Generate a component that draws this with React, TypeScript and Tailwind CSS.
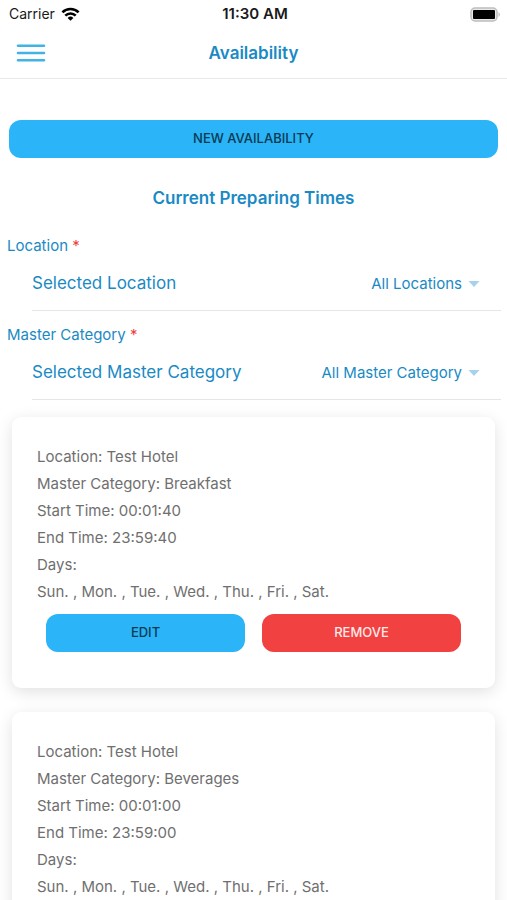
import { useState } from 'react'

type Availability = {
  id: number
  location: string
  category: string
  start: string
  end: string
  days: string[]
}

const week = ['Sun.', 'Mon.', 'Tue.', 'Wed.', 'Thu.', 'Fri.', 'Sat.']

const availabilities: Availability[] = [
  { id: 1, location: 'Test Hotel', category: 'Breakfast', start: '00:01:40', end: '23:59:40', days: week },
  { id: 2, location: 'Test Hotel', category: 'Beverages', start: '00:01:00', end: '23:59:00', days: week },
]

const StatusBar = () => (
  <div className="grid grid-cols-3 items-center h-7 pl-[9px] pr-[6px] text-[#1a1a1a]">
    <div className="flex items-center gap-[6px] text-sm">
      <span>Carrier</span>
      <svg width="19" height="14" viewBox="0 0 18 14" fill="none" stroke="#000" strokeWidth="2.6">
        <path d="M0.9 5.4a11.5 11.5 0 0 1 16.2 0" />
        <path d="M3.8 8.6a7.4 7.4 0 0 1 10.4 0" />
        <path d="M9 13.8L6.1 10.9a4.1 4.1 0 0 1 5.8 0z" fill="#000" stroke="none" />
      </svg>
    </div>
    <span className="text-center text-[15px] font-semibold">11:30 AM</span>
    <svg className="justify-self-end" width="31" height="15" viewBox="0 0 31 15">
      <rect x="1" y="1" width="26" height="13" rx="4" fill="#e8e8e8" stroke="#bdbdbd" strokeWidth="1.5" />
      <rect x="3" y="3" width="22" height="9" rx="1" fill="#000" />
      <path d="M28.5 5.2c1.8.6 1.8 4 0 4.6z" fill="#bdbdbd" />
    </svg>
  </div>
)

const Header = () => (
  <header className="border-b border-[#e9e9e9]">
    <StatusBar />
    <div className="grid grid-cols-[1fr_auto_1fr] items-center h-[50px] px-4">
      <button type="button" aria-label="Menu" className="w-[30px]">
        <svg width="30" height="20" viewBox="0 0 30 20" stroke="#41b3e4" strokeWidth="2.6" strokeLinecap="round">
          <path d="M2 2.7h26M2 10h26M2 17.3h26" />
        </svg>
      </button>
      <h1 className="text-[17px] leading-6 font-semibold">Availability</h1>
    </div>
  </header>
)

type FilterProps = {
  id: string
  label: string
  title: string
  options: string[]
}

const Filter = ({ id, label, title, options }: FilterProps) => {
  const [value, setValue] = useState(options[0])

  return (
    <div className="pl-[7px] pr-[6px]">
      <label htmlFor={id} className="block h-9 pt-[14px] text-[15px] leading-5">
        {label} <span className="text-[#f03c3c]">*</span>
      </label>
      <div className="flex items-center justify-between h-[53px] ml-[25px] pr-[21px] border-b border-[#e6e6e6]">
        <span className="text-[17px]">{title}</span>
        <div className="flex items-center gap-[6px]">
          <select
            id={id}
            value={value}
            onChange={(e) => setValue(e.target.value)}
            className="appearance-none bg-transparent text-[15px] leading-5 text-right outline-none"
          >
            {options.map((option) => (
              <option key={option}>{option}</option>
            ))}
          </select>
          <svg width="12" height="6" viewBox="0 0 12 6" fill="#a6d2ea">
            <path d="M0.5 0h11L6 6z" />
          </svg>
        </div>
      </div>
    </div>
  )
}

const AvailabilityCard = ({ item }: { item: Availability }) => (
  <article className="bg-white rounded-[9px] px-[25px] pt-[26px] pb-9 shadow-[0_4px_16px_rgba(0,0,0,0.12)]">
    <div className="text-[15px] leading-[27px] text-[#6f6f6f]">
      <p>Location: {item.location}</p>
      <p>Master Category: {item.category}</p>
      <p>Start Time: {item.start}</p>
      <p>End Time: {item.end}</p>
      <p>Days:</p>
      <p>{item.days.join(' , ')}</p>
    </div>
    <div className="grid grid-cols-2 gap-[17px] mt-[9px] px-[9px]">
      <button type="button" className="h-[38px] rounded-xl bg-[#2bb4f7] text-[13px] font-medium text-[#083a52]">
        EDIT
      </button>
      <button type="button" className="h-[38px] rounded-xl bg-[#f14141] text-[13px] font-medium text-[#ffe9e9]">
        REMOVE
      </button>
    </div>
  </article>
)

export default function App() {
  return (
    <div className="flex flex-col h-screen bg-white text-[#1a8ac4] font-['Inter','Liberation_Sans',sans-serif]">
      <Header />
      <main className="flex-1 min-h-0 overflow-y-auto [scrollbar-width:none] pt-[41px] pb-6">
        <div className="px-[9px]">
          <button
            type="button"
            className="block w-full h-[38px] rounded-xl bg-[#2bb4f7] text-[13px] font-medium text-[#083a52]"
          >
            NEW AVAILABILITY
          </button>
        </div>
        <h2 className="mt-7 mb-3 text-center text-[17px] leading-6 font-semibold">Current Preparing Times</h2>
        <Filter
          id="location"
          label="Location"
          title="Selected Location"
          options={['All Locations', 'Test Hotel']}
        />
        <Filter
          id="category"
          label="Master Category"
          title="Selected Master Category"
          options={['All Master Category', 'Breakfast', 'Beverages']}
        />
        <div className="flex flex-col gap-6 mt-[17px] px-3">
          {availabilities.map((item) => (
            <AvailabilityCard key={item.id} item={item} />
          ))}
        </div>
      </main>
    </div>
  )
}
